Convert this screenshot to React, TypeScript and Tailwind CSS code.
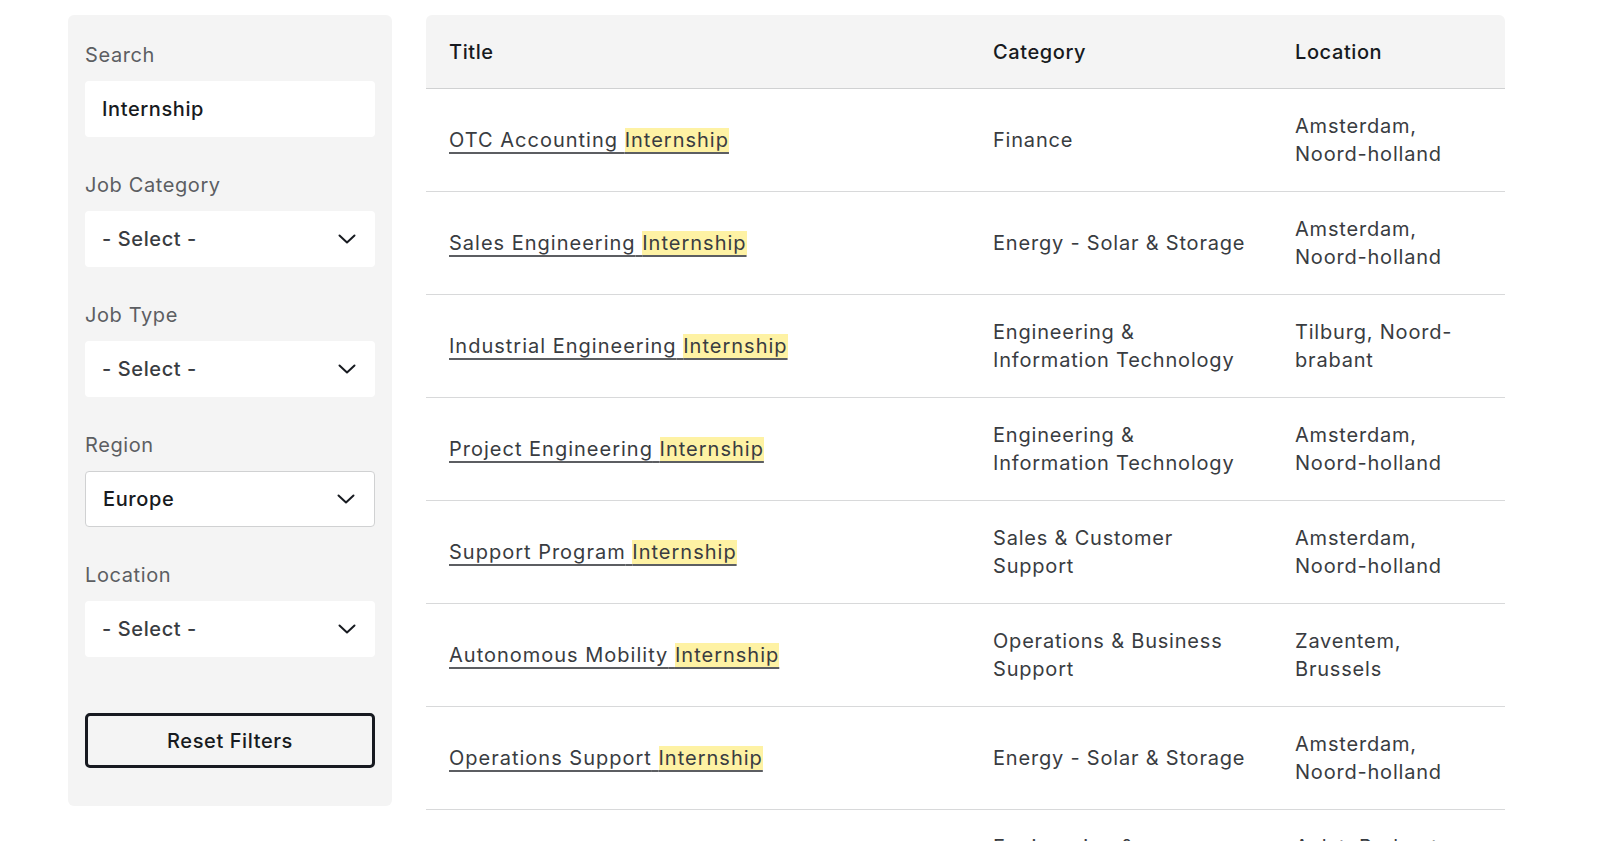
import React from 'react';

type Job = {
  title: string;
  category: string[];
  location: string[];
};

const jobs: Job[] = [
  { title: 'OTC Accounting', category: ['Finance'], location: ['Amsterdam,', 'Noord-holland'] },
  { title: 'Sales Engineering', category: ['Energy - Solar & Storage'], location: ['Amsterdam,', 'Noord-holland'] },
  { title: 'Industrial Engineering', category: ['Engineering &', 'Information Technology'], location: ['Tilburg, Noord-', 'brabant'] },
  { title: 'Project Engineering', category: ['Engineering &', 'Information Technology'], location: ['Amsterdam,', 'Noord-holland'] },
  { title: 'Support Program', category: ['Sales & Customer', 'Support'], location: ['Amsterdam,', 'Noord-holland'] },
  { title: 'Autonomous Mobility', category: ['Operations & Business', 'Support'], location: ['Zaventem,', 'Brussels'] },
  { title: 'Operations Support', category: ['Energy - Solar & Storage'], location: ['Amsterdam,', 'Noord-holland'] },
  { title: 'Manufacturing Engineering', category: ['Engineering &', 'Information Technology'], location: ['Aalst, Brabant', 'Flamand'] },
];

function Chevron() {
  return (
    <svg className="w-[18px] h-[18px] text-[#171a20]" viewBox="0 0 18 18" fill="none" stroke="currentColor">
      <path d="M1.5 5.5l7.5 7 7.5-7" strokeWidth="2" strokeLinecap="round" strokeLinejoin="round" />
    </svg>
  );
}

function Field({ label, children }: { label: string; children: React.ReactNode }) {
  return (
    <div className="flex flex-col">
      <label className="text-[20px] leading-[24px] text-[#5c5e62] tracking-[0.03em] mb-[14px]">{label}</label>
      {children}
    </div>
  );
}

function SelectBox({ value, active }: { value: string; active?: boolean }) {
  return (
    <div
      className={`h-[56px] bg-white rounded-[4px] pl-[17px] pr-[19px] flex items-center justify-between ${
        active ? 'border border-[#d0d1d2] text-[#171a20]' : 'text-[#393c41]'
      }`}
    >
      <span className="text-[20px] font-medium tracking-[0.03em]">{value}</span>
      <Chevron />
    </div>
  );
}

function Sidebar() {
  return (
    <aside className="w-[324px] shrink-0 bg-[#f4f4f4] rounded-[6px] px-[17px] pt-[28px] pb-[38px] flex flex-col">
      <div className="flex flex-col gap-[36px]">
        <Field label="Search">
          <div className="h-[56px] bg-white rounded-[4px] px-[17px] flex items-center">
            <span className="text-[20px] font-medium text-[#171a20] tracking-[0.03em]">Internship</span>
          </div>
        </Field>
        <Field label="Job Category">
          <SelectBox value="- Select -" />
        </Field>
        <Field label="Job Type">
          <SelectBox value="- Select -" />
        </Field>
        <Field label="Region">
          <SelectBox value="Europe" active />
        </Field>
        <Field label="Location">
          <SelectBox value="- Select -" />
        </Field>
      </div>
      <button className="mt-[56px] h-[55px] border-[3px] border-[#171a20] rounded-[5px] text-[20px] font-medium text-[#171a20] tracking-[0.03em]">
        Reset Filters
      </button>
    </aside>
  );
}

function JobTable() {
  return (
    <div className="w-[1079px] shrink-0 text-[20px] tracking-[0.05em] text-[#393c41]">
      <div className="grid grid-cols-[544px_302px_233px] h-[74px] items-center bg-[#f4f4f4] rounded-t-[6px] border-b border-[#d0d1d2] font-medium text-[#171a20] tracking-[0.03em]">
        <div className="px-[23px]">Title</div>
        <div className="px-[23px]">Category</div>
        <div className="px-[23px]">Location</div>
      </div>
      {jobs.map((job) => (
        <div
          key={job.title}
          className="grid grid-cols-[544px_302px_233px] h-[103px] items-center border-b border-[#d8d9da] leading-[28px]"
        >
          <div className="px-[23px]">
            <a className="underline decoration-[#5c5e62] decoration-[1.5px] underline-offset-[5px] cursor-pointer">
              {job.title} <span className="bg-[#fef2a4]">Internship</span>
            </a>
          </div>
          <div className="px-[23px] tracking-[0.04em]">
            {job.category.map((line) => (
              <div key={line}>{line}</div>
            ))}
          </div>
          <div className="px-[23px] tracking-[0.04em]">
            {job.location.map((line) => (
              <div key={line}>{line}</div>
            ))}
          </div>
        </div>
      ))}
    </div>
  );
}

export default function App() {
  return (
    <div className="min-h-screen bg-white font-['Inter',sans-serif] flex items-start gap-[34px] pl-[68px] pt-[15px] overflow-hidden h-[841px]">
      <Sidebar />
      <JobTable />
    </div>
  );
}
